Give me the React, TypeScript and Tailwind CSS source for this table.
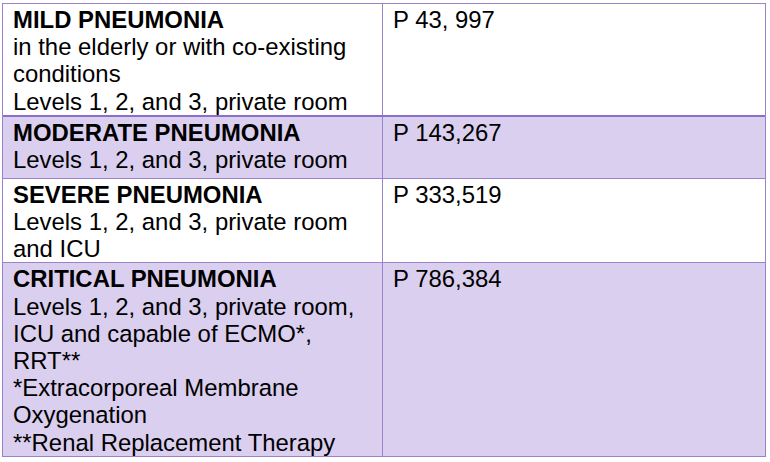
const rows = [
  {
    title: 'MILD PNEUMONIA',
    lines: ['in the elderly or with co-existing conditions', 'Levels 1, 2, and 3, private room'],
    price: 'P 43, 997',
    fill: false,
    h: 'min-h-[110px]',
    pt: 'pt-[2px]',
  },
  {
    title: 'MODERATE PNEUMONIA',
    lines: ['Levels 1, 2, and 3, private room'],
    price: 'P 143,267',
    fill: true,
    h: 'min-h-[63px]',
    pt: 'pt-[2px]',
  },
  {
    title: 'SEVERE PNEUMONIA',
    lines: ['Levels 1, 2, and 3, private room and ICU'],
    price: 'P 333,519',
    fill: false,
    h: 'min-h-[83px]',
    pt: 'pt-[2px]',
  },
  {
    title: 'CRITICAL PNEUMONIA',
    lines: [
      'Levels 1, 2, and 3, private room, ICU and capable of ECMO*, RRT**',
      '*Extracorporeal Membrane Oxygenation',
      '**Renal Replacement Therapy',
    ],
    price: 'P 786,384',
    fill: true,
    h: 'min-h-[193px]',
    pt: 'pt-[2px]',
  },
];

export default function App() {
  return (
    <div className="w-[770px] h-[462px] bg-white pt-[3px] pl-[2px] font-['Liberation_Sans',Arial,sans-serif] text-[23.9px] leading-[27.2px] text-black">
      <div className="w-[764px] border border-[#9b82cc]">
        {rows.map((r, i) => (
          <div
            key={r.title}
            className={`grid grid-cols-[380px_1fr] ${r.h} ${r.fill ? 'bg-[#dacfee]' : 'bg-white'} ${
              i === 1 ? 'border-t-2 border-[#8a6fc7]' : i > 0 ? 'border-t border-[#9b82cc]' : ''
            }`}
          >
            <div className={`pl-[10px] pr-2 ${r.pt} border-r border-[#9b82cc]`}>
              <div className="font-bold">{r.title}</div>
              {r.lines.map((l) => (
                <div key={l}>{l}</div>
              ))}
            </div>
            <div className={`pl-[10px] ${r.pt}`}>{r.price}</div>
          </div>
        ))}
      </div>
    </div>
  );
}
